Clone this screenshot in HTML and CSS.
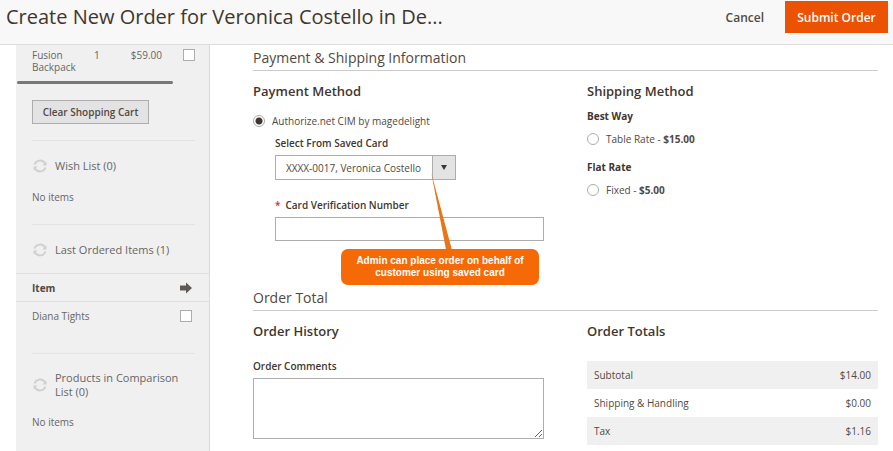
FILE: index.html
```html
<!DOCTYPE html>
<html lang="en">
<head>
    <meta charset="UTF-8">
    <meta name="viewport" content="width=device-width, initial-scale=1.0">
    <title>Create New Order</title>
    <link rel="stylesheet" href="styles.css">
</head>
<body>
    <svg class="symbols" aria-hidden="true">
        <symbol id="refresh" viewBox="0 0 16 16">
            <path d="M2.500 6.500A5.800 5.800 0 0 1 13 5.500M13.500 9.500A5.800 5.800 0 0 1 3 10.500" fill="none" stroke="currentColor" stroke-width="2"/>
            <path d="M14.500 3.500v4h-4zM1.500 12.500v-4h4z" fill="currentColor"/>
        </symbol>
    </svg>
    <header class="page-header">
        <h1>Create New Order for Veronica Costello in De...</h1>
        <div class="actions">
            <button type="button" class="btn-cancel">Cancel</button>
            <button type="submit" class="btn-submit" form="order-form">Submit Order</button>
        </div>
    </header>
    <div class="page">
        <aside class="sidebar">
            <div class="cart-item">
                <label class="name" for="cart-item">Fusion Backpack</label>
                <span class="qty">1</span>
                <span class="price">$59.00</span>
                <input type="checkbox" id="cart-item">
            </div>
            <div class="scrollbar"></div>
            <section class="side-block cart-actions">
                <button type="button" class="btn-clear">Clear Shopping Cart</button>
            </section>
            <section class="side-block">
                <h2><button type="button" class="refresh" aria-label="Refresh"><svg><use href="#refresh"/></svg></button><span>Wish List (0)</span></h2>
                <p>No items</p>
            </section>
            <section class="side-block ordered">
                <h2><button type="button" class="refresh" aria-label="Refresh"><svg><use href="#refresh"/></svg></button><span>Last Ordered Items (1)</span></h2>
                <div class="item-head">
                    <span>Item</span>
                    <svg class="arrow" viewBox="0 0 12 12"><path d="M0 3.500h6V.5L12 6l-6 5.500v-3H0z" fill="#5f5854"/></svg>
                </div>
                <div class="item-row">
                    <label for="diana">Diana Tights</label>
                    <input type="checkbox" id="diana">
                </div>
            </section>
            <section class="side-block">
                <h2><button type="button" class="refresh" aria-label="Refresh"><svg><use href="#refresh"/></svg></button><span>Products in Comparison List (0)</span></h2>
                <p>No items</p>
            </section>
        </aside>
        <main>
            <form id="order-form">
                <h2 class="section-title">Payment &amp; Shipping Information</h2>
                <div class="columns">
                    <section class="payment">
                        <h3>Payment Method</h3>
                        <div class="option">
                            <input type="radio" name="payment" id="authorize" checked>
                            <label for="authorize">Authorize.net CIM by magedelight</label>
                        </div>
                        <div class="fields">
                            <label class="field-label" for="card">Select From Saved Card</label>
                            <div class="select">
                                <select id="card">
                                    <option>XXXX-0017, Veronica Costello</option>
                                </select>
                            </div>
                            <label class="field-label required" for="cvn">Card Verification Number</label>
                            <input type="text" id="cvn">
                        </div>
                        <div class="callout">
                            <svg class="pointer" viewBox="0 0 22 78"><path d="M0 0L21 78H15z" fill="#e8751a"/></svg>
                            Admin can place order on behalf of customer using saved card
                        </div>
                    </section>
                    <section class="shipping">
                        <h3>Shipping Method</h3>
                        <h4>Best Way</h4>
                        <div class="option">
                            <input type="radio" name="shipping" id="table-rate">
                            <label for="table-rate">Table Rate - <b>$15.00</b></label>
                        </div>
                        <h4>Flat Rate</h4>
                        <div class="option">
                            <input type="radio" name="shipping" id="fixed">
                            <label for="fixed">Fixed - <b>$5.00</b></label>
                        </div>
                    </section>
                </div>
                <h2 class="section-title">Order Total</h2>
                <div class="columns">
                    <section class="history">
                        <h3>Order History</h3>
                        <label class="field-label" for="comments">Order Comments</label>
                        <textarea id="comments"></textarea>
                    </section>
                    <section class="totals">
                        <h3>Order Totals</h3>
                        <table>
                            <tr><td>Subtotal</td><td>$14.00</td></tr>
                            <tr><td>Shipping &amp; Handling</td><td>$0.00</td></tr>
                            <tr><td>Tax</td><td>$1.16</td></tr>
                        </table>
                    </section>
                </div>
            </form>
        </main>
    </div>
</body>
</html>
```
FILE: styles.css
```css
* {
    box-sizing: border-box;
}
body {
    margin: 0;
    min-height: 100vh;
    display: flex;
    flex-direction: column;
    font-family: "Open Sans", sans-serif;
    font-size: 11px;
    line-height: 14px;
    color: #514943;
    background: #fff;
}
h1, h2, h3, h4, p {
    margin: 0;
    font-weight: 400;
}
button, input, select, textarea {
    font-family: inherit;
    color: inherit;
    margin: 0;
}
button {
    cursor: pointer;
    padding: 0;
}
.symbols {
    display: none;
}

/* header */
.page-header {
    display: flex;
    justify-content: space-between;
    height: 45px;
    padding: 0 5px 0 6px;
    background: #f8f8f8;
    border-bottom: 1px solid #dcdcdc;
}
h1 {
    font-size: 20px;
    line-height: 34px;
    color: #41362f;
}
.actions {
    display: flex;
    align-items: flex-start;
    gap: 21px;
    padding-top: 1px;
}
.actions button {
    height: 32px;
    border: 0;
    font-size: 12px;
    font-weight: 600;
}
.btn-cancel {
    background: none;
}
.btn-submit {
    width: 103px;
    background: #eb5202;
}
.actions .btn-submit {
    color: #fff;
}

.page {
    flex: 1;
    display: flex;
    padding: 0 15px 0 16px;
}

/* sidebar */
.sidebar {
    width: 194px;
    flex: none;
    background: #f0f0f0;
    border-right: 1px solid #dcdcdc;
    color: #666;
}
.cart-item {
    display: flex;
    align-items: flex-start;
    height: 36px;
    padding: 4px 14px 0 16px;
    font-size: 10px;
    line-height: 12px;
}
.cart-item .name {
    width: 62px;
    padding-right: 10px;
}
.cart-item .price {
    margin-left: auto;
    margin-right: 21px;
}
input[type="checkbox"] {
    appearance: none;
    width: 12px;
    height: 12px;
    background: #fff;
    border: 1px solid #adadad;
}
.scrollbar {
    width: 156px;
    height: 3px;
    margin-left: 1px;
    background: #777;
    border-radius: 2px;
}
.side-block {
    padding: 17px 0 20px;
    margin: 0 14px 0 16px;
}
.side-block + .side-block {
    border-top: 1px solid #e3e3e3;
}
.side-block.cart-actions {
    padding: 16px 0;
}
.btn-clear {
    display: block;
    width: 117px;
    height: 24px;
    border: 1px solid #adadad;
    background: #e3e3e3;
    font-size: 10px;
    font-weight: 600;
    color: #514943;
}
.side-block h2 {
    display: flex;
    align-items: center;
    gap: 7px;
    font-size: 11px;
    line-height: 14px;
    margin-bottom: 16px;
}
.refresh {
    width: 16px;
    height: 16px;
    flex: none;
    border: 0;
    background: none;
    color: #d0d0d0;
}
.refresh svg {
    display: block;
    width: 16px;
    height: 16px;
}
.side-block p {
    font-size: 10px;
}
.side-block.ordered {
    padding-bottom: 24px;
}
.ordered h2 {
    margin-bottom: 15px;
}
.item-head, .item-row {
    display: flex;
    justify-content: space-between;
    align-items: center;
    margin: 0 -14px 0 -16px;
    padding: 0 17px 0 16px;
    height: 27px;
    font-size: 10px;
}
.item-head {
    height: 29px;
    border-top: 1px solid #e0e0e0;
    border-bottom: 1px solid #e0e0e0;
    font-weight: 700;
    color: #514943;
}
.arrow {
    width: 12px;
    height: 12px;
}

/* order form */
main {
    flex: 1;
    min-width: 0;
    padding-left: 43px;
}
.section-title {
    padding: 2px 0 1px;
    font-size: 14px;
    line-height: 22px;
    border-bottom: 1px solid #ccc;
}
.columns {
    display: grid;
    grid-template-columns: 1fr 1fr;
    gap: 43px;
    padding-top: 10px;
}
h3 {
    font-size: 13px;
    line-height: 20px;
    font-weight: 600;
    color: #41362f;
}
h4 {
    font-weight: 700;
    font-size: 10px;
    color: #41362f;
}
.payment {
    position: relative;
    min-height: 204px;
}
.option {
    display: flex;
    align-items: center;
    gap: 7px;
    font-size: 10px;
}
.payment .option {
    margin-top: 13px;
}
.shipping h3 {
    margin-bottom: 8px;
}
.shipping .option {
    margin: 9px 0 14px;
}
input[type="radio"] {
    appearance: none;
    width: 12px;
    height: 12px;
    border: 1px solid #adadad;
    border-radius: 50%;
    background: #fff;
}
input[type="radio"]:checked {
    background: radial-gradient(#41362f 3px, #fff 4px);
}
.fields {
    padding: 8px 0 0 22px;
}
.field-label {
    display: block;
    font-size: 10px;
    font-weight: 600;
    color: #41362f;
}
.select {
    position: relative;
    width: 181px;
    margin: 5px 0 18px;
}
.select::after {
    content: "";
    position: absolute;
    top: 10px;
    right: 9px;
    border: 3px solid transparent;
    border-top: 5px solid #41362f;
    border-bottom: 0;
    pointer-events: none;
}
select {
    appearance: none;
    display: block;
    width: 100%;
    height: 25px;
    padding: 0 25px 0 10px;
    border: 1px solid #adadad;
    border-radius: 0;
    background: linear-gradient(#adadad, #adadad) right 22px top / 1px 100% no-repeat,
        linear-gradient(#e3e3e3, #e3e3e3) right / 22px 100% no-repeat #fff;
    font-size: 10px;
}
.required::before {
    content: "*";
    margin-right: 5px;
    color: #e22626;
}
input[type="text"] {
    display: block;
    width: 100%;
    height: 24px;
    margin-top: 5px;
    border: 1px solid #adadad;
}
.callout {
    position: absolute;
    top: 168px;
    left: 88px;
    width: 198px;
    padding: 6px 10px;
    border-radius: 7px;
    background: #f56a06;
    color: #fff;
    font: 700 10px/12px "Liberation Sans", Arial, sans-serif;
    text-align: center;
}
.pointer {
    position: absolute;
    left: 90px;
    bottom: 100%;
    width: 22px;
    height: 76px;
}
.history .field-label {
    margin-top: 18px;
}
textarea {
    display: block;
    width: 100%;
    height: 61px;
    margin-top: 5px;
    border: 1px solid #adadad;
}
table {
    width: 100%;
    margin-top: 20px;
    border-collapse: collapse;
    font-size: 10px;
}
td {
    height: 28px;
    padding: 0 7px;
}
td:last-child {
    text-align: right;
}
tr:nth-child(odd) {
    background: #f0f0f0;
}
```
